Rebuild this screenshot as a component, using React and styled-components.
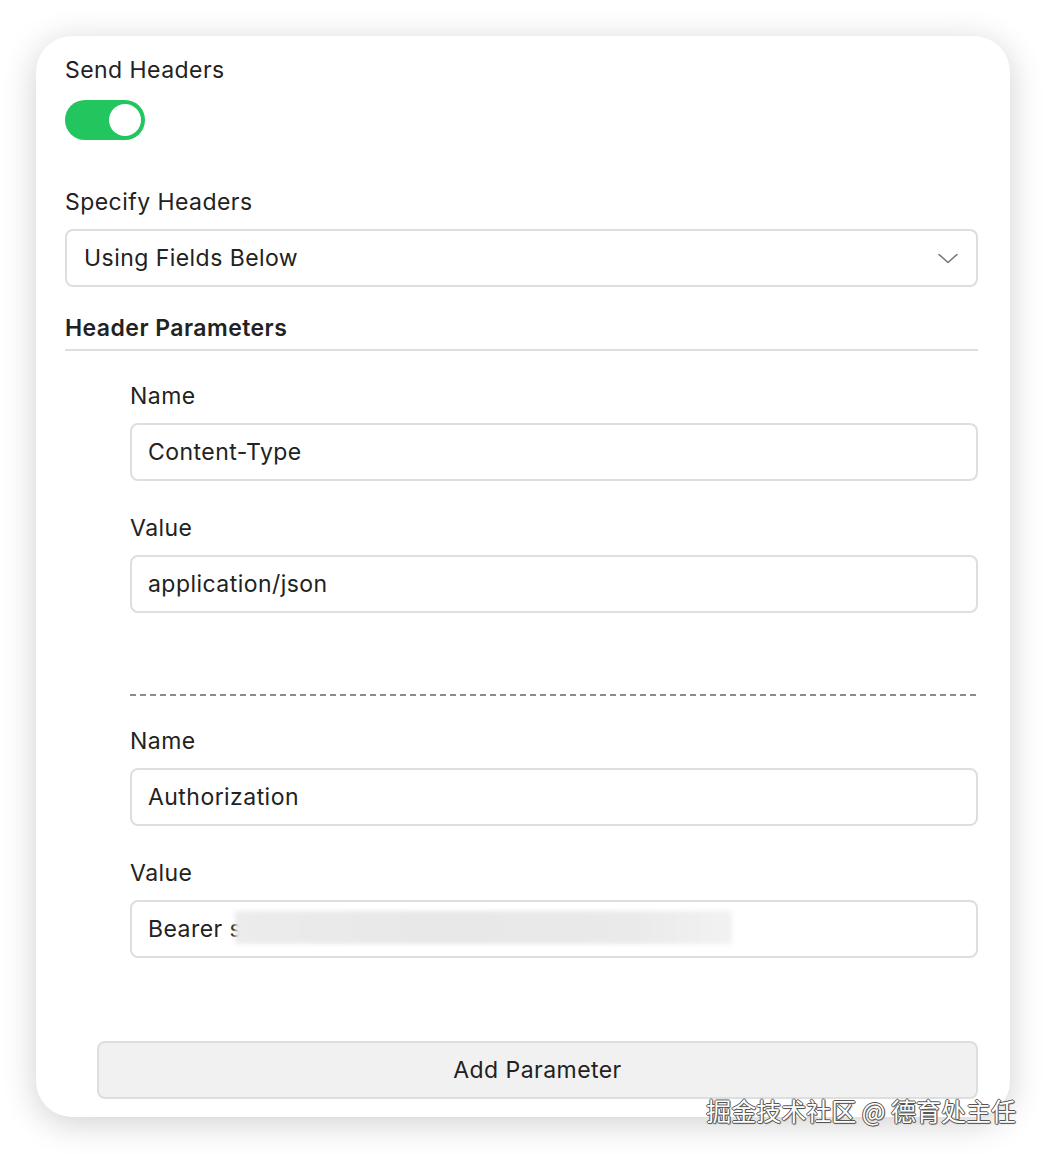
import React from 'react';
import styled, { createGlobalStyle } from 'styled-components';

const Global = createGlobalStyle`
  body {
    margin: 0;
    background: #ffffff;
    font-family: Inter, "Noto Sans", sans-serif;
    color: #222;
  }
`

const Page = styled.div`
  position: relative;
  width: 1046px;
  height: 1154px;
  padding: 36px 36px 0 36px;
  box-sizing: border-box;
`

const Card = styled.div`
  width: 974px;
  height: 1081px;
  box-sizing: border-box;
  background: #fff;
  border-radius: 36px;
  box-shadow: 0 6px 34px rgba(0, 0, 0, 0.19);
  padding: 21px 32px 18px 29px;
  display: flex;
  flex-direction: column;
  letter-spacing: 0.45px;
`

const Label = styled.div`
  font-size: 23px;
  line-height: 26px;
  color: #222;
  font-weight: ${p => (p.$bold ? 600 : 400)};
`

const Toggle = styled.div`
  width: 80px;
  height: 40px;
  border-radius: 20px;
  background: #22c55e;
  margin-top: 17px;
  display: flex;
  align-items: center;
  justify-content: flex-end;
  padding: 0 4px;
  box-sizing: border-box;

  &::after {
    content: '';
    width: 32px;
    height: 32px;
    border-radius: 50%;
    background: #fff;
  }
`

const Section = styled.div`
  display: flex;
  flex-direction: column;
  gap: 14px;
  margin-top: ${p => p.$top || 0}px;
`

const Select = styled.div`
  height: 58px;
  box-sizing: border-box;
  border: 2px solid #dedede;
  border-radius: 8px;
  display: flex;
  align-items: center;
  justify-content: space-between;
  padding: 0 18px 0 17px;
  font-size: 23px;
  color: #222;
`

const HeaderTitle = styled.div`
  margin-top: 28px;
  padding-bottom: 8px;
  border-bottom: 2px solid #dedede;
`

const Params = styled.div`
  padding-left: 65px;
  display: flex;
  flex-direction: column;
`

const Block = styled.div`
  display: flex;
  flex-direction: column;
  gap: 34px;
  margin-top: 32px;
`

const Input = styled.div`
  position: relative;
  height: 58px;
  box-sizing: border-box;
  border: 2px solid #dedede;
  border-radius: 8px;
  display: flex;
  align-items: center;
  padding: 0 17px 0 16px;
  font-size: 23px;
  color: #222;
  overflow: hidden;
`

const Blur = styled.div`
  position: absolute;
  left: 103px;
  top: 9px;
  width: 497px;
  height: 33px;
  background: linear-gradient(90deg, #ececec, #e8e8e8 40%, #eaeaea 80%, #f2f2f2);
  filter: blur(2px);
`

const Dashed = styled.div`
  margin-top: 81px;
  height: 1.5px;
  background: repeating-linear-gradient(to right, #8c8c8c 0 6px, transparent 6px 10px);
`

const AddButton = styled.div`
  margin: auto 0 0 32px;
  height: 58px;
  box-sizing: border-box;
  border: 2px solid #dedede;
  border-radius: 8px;
  background: #f1f1f1;
  display: flex;
  align-items: center;
  justify-content: center;
  font-size: 23px;
  color: #222;
`

const Watermark = styled.div`
  position: absolute;
  right: 30px;
  top: 1094px;
  font-family: "Noto Sans CJK SC", sans-serif;
  font-size: 25px;
  line-height: 32px;
  color: #fff;
  text-shadow: 1px 0 0 #555, -1px 0 0 #555, 0 1px 0 #555, 0 -1px 0 #555, 1px 1px 1px #777;
`

const Chevron = () => (
  <svg width="20" height="11" viewBox="0 0 20 11" fill="none">
    <path d="M1 1.5 L10 9.5 L19 1.5" stroke="#777" strokeWidth="1.6" strokeLinecap="round" strokeLinejoin="round" />
  </svg>
)

const Field = ({ label, children }) => (
  <Section>
    <Label>{label}</Label>
    {children}
  </Section>
)

export default function App() {
  return (
    <Page>
      <Global />
      <Card>
        <Label>Send Headers</Label>
        <Toggle />
        <Section $top={49}>
          <Label>Specify Headers</Label>
          <Select>
            <span>Using Fields Below</span>
            <Chevron />
          </Select>
        </Section>
        <HeaderTitle>
          <Label $bold>Header Parameters</Label>
        </HeaderTitle>
        <Params>
          <Block>
            <Field label="Name"><Input>Content-Type</Input></Field>
            <Field label="Value"><Input>application/json</Input></Field>
          </Block>
          <Dashed />
          <Block>
            <Field label="Name"><Input>Authorization</Input></Field>
            <Field label="Value">
              <Input>
                Bearer s
                <Blur />
              </Input>
            </Field>
          </Block>
        </Params>
        <AddButton>Add Parameter</AddButton>
      </Card>
      <Watermark>掘金技术社区 @ 德育处主任</Watermark>
    </Page>
  );
}
